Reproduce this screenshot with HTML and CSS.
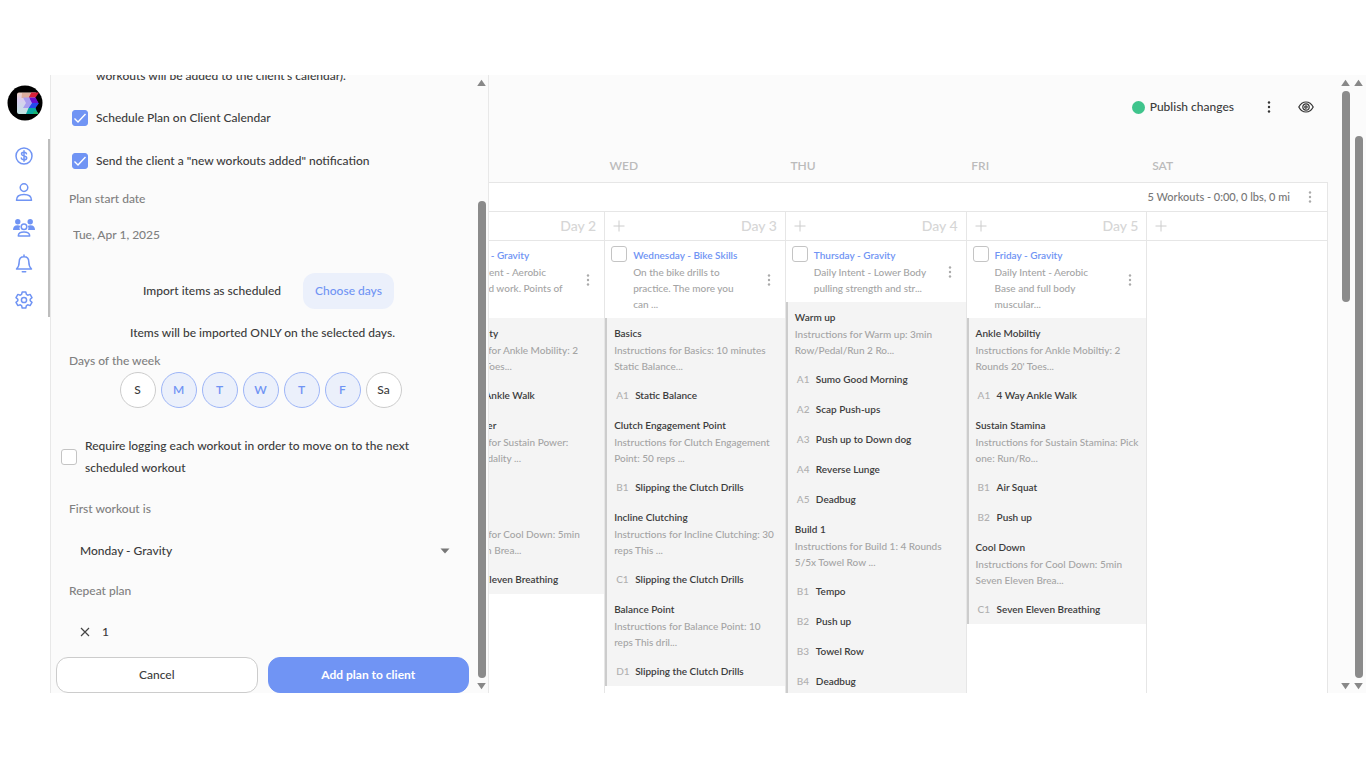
FILE: index.html
```html
<!DOCTYPE html>
<html lang="en">
<head>
<meta charset="utf-8">
<title>Plan calendar</title>
<link rel="stylesheet" href="styles.css">
</head>
<body>
<svg class="defs" aria-hidden="true">
  <symbol id="kebab" viewBox="0 0 4 12"><circle cx="2" cy="1.5" r="1.2"/><circle cx="2" cy="6" r="1.2"/><circle cx="2" cy="10.5" r="1.2"/></symbol>
  <symbol id="plus" viewBox="0 0 12 12"><path d="M6 .5v11M.5 6h11"/></symbol>
  <symbol id="up" viewBox="0 0 9 8"><path d="M4.500 .8 L8.800 7 H.2Z"/></symbol>
  <symbol id="down" viewBox="0 0 9 8"><path d="M4.500 7.200 L8.800 1 H.2Z"/></symbol>
</svg>
<div class="app">
  <nav class="rail" aria-label="Main">
    <a class="logo" href="#" aria-label="Home">
      <svg viewBox="0 0 36 36">
        <defs><linearGradient id="pale" x1="0" y1="0" x2="0" y2="1"><stop offset="0" stop-color="#f0d3c4"/><stop offset=".35" stop-color="#d9cdf0"/><stop offset="1" stop-color="#c2e4e2"/></linearGradient></defs>
        <circle cx="18" cy="18" r="17.500" fill="#000"/>
        <path d="M12 7.500h17l-1 5 3 5.500-3 5 2 6H12a2 2 0 0 1-2-2v-17.500a2 2 0 0 1 2-2Z" fill="url(#pale)"/>
        <path d="M24 7.500h8l-3.500 5h-7.500Z" fill="#d9213a"/>
        <path d="M15 8h9l-2.500 5h-7Z" fill="#dcae9f"/>
        <path d="M22 12.500h6.500l3 5.500H24Z" fill="#6a10cf"/>
        <path d="M16 12.500h6l3 5.500-4 5h-5l3-5Z" fill="#a99df0"/>
        <path d="M25 18h7l-3.500 5h-7Z" fill="#2548ee"/>
        <path d="M21.500 23h7l2.500 6H19Z" fill="#08a9a2"/>
        <path d="M27 26l3.500 1 .8 2H26Z" fill="#1ab568"/>
      </svg>
    </a>
    <div class="rail-links">
      <a href="#" aria-label="Billing"><svg viewBox="0 0 18 18"><circle cx="9" cy="9" r="8"/><path d="M11.500 6.800c-.2-1-1.200-1.500-2.500-1.500s-2.500.5-2.500 1.700c0 2.600 5.200 1.300 5.200 4 0 1.200-1.200 1.800-2.700 1.800s-2.600-.7-2.700-1.800M9 3.800v10.400"/></svg></a>
      <a href="#" aria-label="Client"><svg viewBox="0 0 18 18"><circle cx="9" cy="4.600" r="3.800"/><path d="M1.500 17.200c0-3.600 2.700-5.700 7.500-5.700s7.500 2.100 7.500 5.700Z"/></svg></a>
      <a href="#" aria-label="Groups"><svg class="wide" viewBox="0 0 22 18"><g class="solid"><circle cx="4.800" cy="2.800" r="2.700"/><circle cx="17.200" cy="2.800" r="2.700"/><path d="M0 11c0-3 1.500-4.700 4.500-4.700 1.300 0 2.200.3 2.800.8C6.300 8.500 6.400 10 7 11ZM22 11c0-3-1.500-4.700-4.500-4.700-1.300 0-2.200.3-2.800.8 1 1.400.9 2.900.3 3.900Z"/></g><circle cx="11" cy="7.800" r="2.800"/><path d="M5.300 17c0-2.700 2-4 5.700-4s5.700 1.300 5.700 4Z"/></svg></a>
      <a href="#" aria-label="Notifications"><svg viewBox="0 0 18 18"><path d="M9 1.700C5.800 1.700 4.200 4 4.200 6.800c0 4-.9 5.600-2.700 7.200h15c-1.800-1.600-2.700-3.200-2.700-7.200 0-2.800-1.600-5.100-4.800-5.100ZM9 0v1.700M7.300 16.800h3.400"/></svg></a>
      <a href="#" aria-label="Settings"><svg viewBox="0 0 18 18"><circle cx="9" cy="9" r="2.600"/><path d="M7.200 1h3.600l.6 2.400 1.300.8 2.400-.8 1.900 3.200-1.800 1.700v1.400l1.800 1.700-1.900 3.200-2.400-.8-1.300.8-.6 2.400H7.200l-.6-2.400-1.300-.8-2.400.8L1 11.400l1.800-1.700V8.300L1 6.600l1.900-3.200 2.400.8 1.300-.8Z"/></svg></a>
    </div>
  </nav>

  <form class="panel">
    <div class="fields">
      <p class="tail">workouts will be added to the client's calendar).</p>
      <label class="check"><input type="checkbox" checked><span>Schedule Plan on Client Calendar</span></label>
      <label class="check"><input type="checkbox" checked><span>Send the client a "new workouts added" notification</span></label>
      <label class="caption" for="start">Plan start date</label>
      <input class="date" id="start" type="text" value="Tue, Apr 1, 2025">
      <div class="import"><span>Import items as scheduled</span><button type="button">Choose days</button></div>
      <p class="note">Items will be imported ONLY on the selected days.</p>
      <p class="caption" id="days">Days of the week</p>
      <div class="days" role="group" aria-labelledby="days">
        <button type="button">S</button><button type="button" class="on">M</button><button type="button" class="on">T</button><button type="button" class="on">W</button><button type="button" class="on">T</button><button type="button" class="on">F</button><button type="button">Sa</button>
      </div>
      <label class="check require"><input type="checkbox"><span>Require logging each workout in order to move on to the next scheduled workout</span></label>
      <label class="caption" for="first">First workout is</label>
      <div class="select"><select id="first"><option>Monday - Gravity</option></select><svg viewBox="0 0 10 6"><path d="M.5.5h9L5 5.500Z"/></svg></div>
      <label class="caption" for="repeat">Repeat plan</label>
      <div class="repeat"><svg viewBox="0 0 10 10"><path d="M1 1l8 8M9 1L1 9"/></svg><input id="repeat" type="text" value="1"></div>
      <div class="actions"><button type="button" class="cancel">Cancel</button><button type="submit" class="submit">Add plan to client</button></div>
    </div>
    <div class="bar bar-panel" aria-hidden="true"><svg><use href="#up"/></svg><div class="track"><i></i></div><svg><use href="#down"/></svg></div>
  </form>

  <main class="main">
    <header class="toolbar">
      <button type="button" class="publish"><i></i>Publish changes</button>
      <button type="button" class="more" aria-label="More"><svg><use href="#kebab"/></svg></button>
      <button type="button" class="eye" aria-label="Preview"><svg viewBox="0 0 16 12"><path d="M.8 6C2.500 2.700 5 1 8 1s5.500 1.700 7.200 5C13.500 9.300 11 11 8 11S2.500 9.300.8 6Z"/><circle cx="8" cy="6" r="3.200"/><circle cx="8" cy="6" r="1.200"/></svg></button>
    </header>
    <div class="weekdays"><span></span><span></span><span></span><span>WED</span><span>THU</span><span>FRI</span><span>SAT</span></div>
    <section class="week">
      <div class="summary"><span>5 Workouts - 0:00, 0 lbs, 0 mi</span><button type="button" aria-label="Week menu"><svg class="dots"><use href="#kebab"/></svg></button></div>
      <div class="columns">
        <div class="day"></div>
        <div class="day"></div>
        <div class="day">
          <div class="day-head"><span></span><span>Day 2</span></div>
          <article>
            <div class="workout"><span class="box-space"></span><div><a href="#">Tuesday - Gravity</a><p>Daily Intent - Aerobic<br>threshold work. Points of</p><p>&nbsp;</p></div><button type="button" aria-label="Workout menu"><svg class="dots"><use href="#kebab"/></svg></button></div>
            <div class="body">
              <h3>Ankle Mobility</h3><p>Instructions for Ankle Mobility: 2<br>Rounds 20' Toes...</p>
              <ul><li><b>A1</b>4 Way Ankle Walk</li></ul>
              <h3>Sustain Power</h3><p>Instructions for Sustain Power:<br>Pick one modality ...</p>
              <ul><li><b>B1</b></li></ul>
              <h3>Cool Down</h3><p>Instructions for Cool Down: 5min<br>Seven Eleven Brea...</p>
              <ul><li><b>C1</b>Seven Eleven Breathing</li></ul>
            </div>
          </article>
        </div>
        <div class="day">
          <div class="day-head"><button type="button" aria-label="Add"><svg><use href="#plus"/></svg></button><span>Day 3</span></div>
          <article>
            <div class="workout"><input type="checkbox" aria-label="Select Wednesday - Bike Skills"><div><a href="#">Wednesday - Bike Skills</a><p>On the bike drills to<br>practice. The more you<br>can ...</p></div><button type="button" aria-label="Workout menu"><svg class="dots"><use href="#kebab"/></svg></button></div>
            <div class="body">
              <h3>Basics</h3><p>Instructions for Basics: 10 minutes<br>Static Balance...</p>
              <ul><li><b>A1</b>Static Balance</li></ul>
              <h3>Clutch Engagement Point</h3><p>Instructions for Clutch Engagement<br>Point: 50 reps ...</p>
              <ul><li><b>B1</b>Slipping the Clutch Drills</li></ul>
              <h3>Incline Clutching</h3><p>Instructions for Incline Clutching: 30<br>reps This ...</p>
              <ul><li><b>C1</b>Slipping the Clutch Drills</li></ul>
              <h3>Balance Point</h3><p>Instructions for Balance Point: 10<br>reps This dril...</p>
              <ul><li><b>D1</b>Slipping the Clutch Drills</li></ul>
            </div>
          </article>
        </div>
        <div class="day">
          <div class="day-head"><button type="button" aria-label="Add"><svg><use href="#plus"/></svg></button><span>Day 4</span></div>
          <article>
            <div class="workout"><input type="checkbox" aria-label="Select Thursday - Gravity"><div><a href="#">Thursday - Gravity</a><p>Daily Intent - Lower Body<br>pulling strength and str...</p></div><button type="button" aria-label="Workout menu"><svg class="dots"><use href="#kebab"/></svg></button></div>
            <div class="body">
              <h3>Warm up</h3><p>Instructions for Warm up: 3min<br>Row/Pedal/Run 2 Ro...</p>
              <ul><li><b>A1</b>Sumo Good Morning</li><li><b>A2</b>Scap Push-ups</li><li><b>A3</b>Push up to Down dog</li><li><b>A4</b>Reverse Lunge</li><li><b>A5</b>Deadbug</li></ul>
              <h3>Build 1</h3><p>Instructions for Build 1: 4 Rounds<br>5/5x Towel Row ...</p>
              <ul><li><b>B1</b>Tempo</li><li><b>B2</b>Push up</li><li><b>B3</b>Towel Row</li><li><b>B4</b>Deadbug</li></ul>
            </div>
          </article>
        </div>
        <div class="day">
          <div class="day-head"><button type="button" aria-label="Add"><svg><use href="#plus"/></svg></button><span>Day 5</span></div>
          <article>
            <div class="workout"><input type="checkbox" aria-label="Select Friday - Gravity"><div><a href="#">Friday - Gravity</a><p>Daily Intent - Aerobic<br>Base and full body<br>muscular...</p></div><button type="button" aria-label="Workout menu"><svg class="dots"><use href="#kebab"/></svg></button></div>
            <div class="body">
              <h3>Ankle Mobiltiy</h3><p>Instructions for Ankle Mobiltiy: 2<br>Rounds 20' Toes...</p>
              <ul><li><b>A1</b>4 Way Ankle Walk</li></ul>
              <h3>Sustain Stamina</h3><p>Instructions for Sustain Stamina: Pick<br>one: Run/Ro...</p>
              <ul><li><b>B1</b>Air Squat</li><li><b>B2</b>Push up</li></ul>
              <h3>Cool Down</h3><p>Instructions for Cool Down: 5min<br>Seven Eleven Brea...</p>
              <ul><li><b>C1</b>Seven Eleven Breathing</li></ul>
            </div>
          </article>
        </div>
        <div class="day">
          <div class="day-head"><button type="button" aria-label="Add"><svg><use href="#plus"/></svg></button><span></span></div>
        </div>
      </div>
    </section>
  </main>
  <div class="bars" aria-hidden="true">
    <div class="bar bar-main"><svg><use href="#up"/></svg><div class="track"><i></i></div><svg><use href="#down"/></svg></div>
    <div class="bar bar-page"><svg><use href="#up"/></svg><div class="track"><i></i></div><svg><use href="#down"/></svg></div>
  </div>
</div>
</body>
</html>
```
FILE: styles.css
```css
* { box-sizing: border-box; }
body {
  margin: 0;
  padding: 75px 0;
  height: 100vh;
  background: #fff;
  color: #3c3c3c;
  font: 500 12px/20px Lato, "Open Sans", sans-serif;
}
p, h3, ul { margin: 0; padding: 0; }
button, input, select { font: inherit; color: inherit; }
button { padding: 0; border: 0; background: none; cursor: pointer; }
a { color: #7094f4; text-decoration: none; }
svg { display: block; flex: none; }
.defs { width: 0; height: 0; position: absolute; }

.app { position: relative; display: flex; height: 100%; overflow: hidden; background: #fbfbfb; }

/* icon rail */
.rail { width: 50px; flex: none; display: flex; flex-direction: column; padding-top: 10px; gap: 18px; background: #fff; }
.logo { padding-left: 7px; }
.logo svg { width: 36px; height: 36px; }
.rail-links { display: flex; flex-direction: column; align-items: center; gap: 18px; height: 178px; padding-top: 8px; border-right: 2px solid #bdbdbd; }
.rail-links svg { width: 18px; height: 18px; fill: none; stroke: #7094f4; stroke-width: 1.500; stroke-linecap: round; stroke-linejoin: round; overflow: visible; }
.rail-links svg.wide { width: 22px; }
.rail-links .solid { fill: #7094f4; stroke: none; }

/* drawer over the calendar */
.panel {
  position: absolute; z-index: 2; left: 50px; top: 0; bottom: 0; width: 439px;
  display: flex; background: #fbfbfb; border: solid #e8e8e8; border-width: 0 1px;
}
.fields { flex: 1; display: flex; flex-direction: column; padding: 0 8px 0 5px; overflow: hidden; }
.tail { height: 12px; margin-bottom: 9px; padding-left: 40px; display: flex; align-items: flex-end; line-height: 22px; overflow: hidden; flex: none; }
.check { display: flex; align-items: center; gap: 8px; min-height: 43px; padding-left: 16px; line-height: 22px; }
input[type="checkbox"] { appearance: none; flex: none; width: 16px; height: 16px; margin: 0; border: 1px solid #c4c4c4; border-radius: 3px; background: #fff; }
input[type="checkbox"]:checked {
  border-color: #7094f4;
  background: #7094f4 url("data:image/svg+xml,%3Csvg xmlns='http://www.w3.org/2000/svg' viewBox='0 0 14 14'%3E%3Cpath d='M1.500 7.500l3.500 3.500 7.500-8' fill='none' stroke='white' stroke-width='1.400'/%3E%3C/svg%3E") center / 14px no-repeat;
}
.caption { padding-left: 13px; color: #808080; margin-top: 6px; }
.check + .caption { margin-top: 7px; }
.date { width: 100%; height: 50px; padding: 0 17px; border: 0; background: none; color: #808080; }
.import { display: flex; align-items: center; justify-content: center; gap: 22px; margin: 14px 0; padding-left: 12px; }
.import button { height: 36px; padding: 0 12px; border-radius: 12px; background: #ebf0fb; color: #7094f4; }
.note { text-align: center; margin-bottom: 2px; }
.days { display: flex; justify-content: center; gap: 5px; margin: 1px 0 27px; padding-right: 4px; }
.days button { width: 36px; height: 36px; border: 1px solid #ccc; border-radius: 50%; background: #fff; }
.days .on { border-color: #9db5f7; background: #ebf0fb; color: #7094f4; font-weight: 600; }
.require { padding: 0 50px 0 5px; margin-bottom: 13px; }
.select { display: flex; align-items: center; margin-top: 7px; }
.select select { flex: 1; height: 50px; margin-right: -29px; padding: 0 24px; border: 0; background: none; appearance: none; }
.select svg { width: 10px; height: 6px; margin-right: 19px; fill: #777; pointer-events: none; }
.select + .caption { margin-top: 5px; }
.repeat { display: flex; align-items: center; gap: 12px; height: 40px; margin: 11px 0 5px; padding-left: 24px; }
.repeat svg { width: 10px; height: 10px; stroke: #444; stroke-width: 1.200; }
.repeat input { width: 60px; padding: 0; border: 0; background: none; }
.actions { display: flex; gap: 10px; }
.actions button { flex: 1; height: 36px; border: 1px solid #ccc; border-radius: 12px; background: #fff; }
.actions .submit { border-color: #7094f4; background: #7094f4; color: #fff; font-weight: 700; }

/* scroll bars */
.bar { display: flex; flex-direction: column; align-items: center; width: 9px; padding: 4px 0 3px; }
.bar svg { width: 9px; height: 8px; fill: #888; }
.track { flex: 1; display: flex; flex-direction: column; width: 8px; margin: 4px 0; }
.track i { border-radius: 4px; background: #8b8b8b; }
.track::before, .track::after { content: ""; }
.bar-panel { margin-right: 2px; }
.bar-panel .track::before { flex: 110; }
.bar-panel i { flex: 476; }
.bar-main i { flex: 211; }
.bar-main .track::after { flex: 375; }
.bar-page .track::before { flex: 45; }
.bar-page i { flex: 541; }
.bars { flex: none; display: flex; gap: 4px; padding: 0 3px 0 13px; }

/* calendar */
.main { flex: 1; min-width: 0; display: flex; flex-direction: column; padding-left: 12px; }
.toolbar { display: flex; align-items: center; justify-content: flex-end; height: 64px; padding-right: 14px; flex: none; }
.publish { display: flex; align-items: center; gap: 5px; }
.publish i { width: 13px; height: 13px; border-radius: 50%; background: #3fc48c; }
.more { margin: 0 27px 0 33px; }
.more svg { width: 4px; height: 12px; fill: #333; }
.eye svg { width: 16px; height: 12px; fill: none; stroke: #333; stroke-width: 1.200; }
.weekdays { display: grid; grid-template-columns: repeat(7, 1fr); height: 43px; padding-top: 17px; color: #bbb; font-weight: 600; flex: none; }
.weekdays span { padding-left: 5px; }
.week { flex: 1; min-height: 0; display: flex; flex-direction: column; background: #fff; border: solid #e6e6e6; border-width: 1px 1px 0 0; }
.summary { display: flex; align-items: center; justify-content: flex-end; gap: 18px; height: 28px; padding-right: 15px; color: #777; font-size: 11px; flex: none; }
.dots { width: 4px; height: 12px; fill: #aaa; }
.columns { flex: 1; min-height: 0; display: grid; grid-template-columns: repeat(7, minmax(0, 1fr)); border-top: 1px solid #e6e6e6; }
.day { overflow: hidden; border-left: 1px solid #e6e6e6; }
.day-head { display: flex; align-items: center; justify-content: space-between; height: 29px; padding: 0 8px; border-bottom: 1px solid #e6e6e6; color: #d6d6d6; font-size: 14px; }
.day-head svg { width: 12px; height: 12px; stroke: #ccc; stroke-width: 1; }
.workout { display: flex; gap: 6px; padding: 5px 14px 5px 6px; font-size: 10px; line-height: 16px; }
.workout div { flex: 1; white-space: nowrap; }
.workout a { display: block; line-height: 18px; font-weight: 600; }
.workout p { color: #a4a4a4; }
.workout p:last-child { padding-bottom: 1px; }
.workout button { align-self: center; }
.box-space { width: 16px; }
.body { padding-left: 7px; border-left: 2px solid #ccc; background: #f4f4f4; font-size: 10px; line-height: 16px; white-space: nowrap; }
.body h3 { padding-top: 6px; font: inherit; line-height: 18px; font-weight: 600; }
.body p { color: #a4a4a4; }
.body ul { list-style: none; padding-top: 6px; }
.body li { display: flex; align-items: center; height: 30px; padding-left: 2px; font-weight: 600; }
.body li b { width: 19px; color: #b0b0b0; font-weight: 500; }
```
